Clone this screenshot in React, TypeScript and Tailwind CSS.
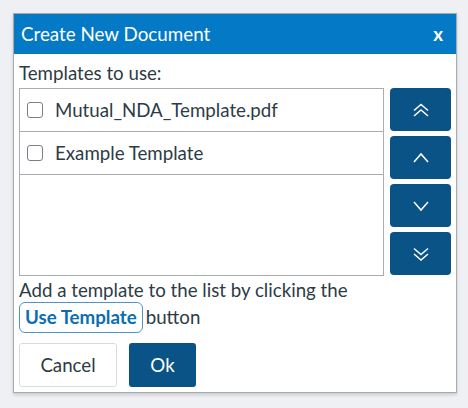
import React from 'react';

function Chevron({ dir, double }: { dir: 'up' | 'down'; double?: boolean }) {
  const up = dir === 'up';
  const paths = double
    ? up
      ? ['M1 7.5 L8 1.5 L15 7.5', 'M1 13 L8 7 L15 13']
      : ['M1 1.5 L8 7.5 L15 1.5', 'M1 7 L8 13 L15 7']
    : up
      ? ['M1 11 L8 3 L15 11']
      : ['M1 3 L8 11 L15 3'];
  return (
    <svg width="16" height="14" viewBox="0 0 16 14" fill="none" stroke="white" strokeWidth="1.5">
      {paths.map((d) => (
        <path key={d} d={d} />
      ))}
    </svg>
  );
}

export default function App() {
  const templates = ['Mutual_NDA_Template.pdf', 'Example Template'];
  const moves: { dir: 'up' | 'down'; double?: boolean }[] = [
    { dir: 'up', double: true },
    { dir: 'up' },
    { dir: 'down' },
    { dir: 'down', double: true },
  ];

  return (
    <div className="min-h-screen w-full bg-[#eef0f4] p-[13px] font-['Lato','Noto_Sans',sans-serif] text-[#2d3b45]">
      <div className="w-[444px] border border-[#a7abaf] bg-white shadow-[0_2px_3px_rgba(0,0,0,0.15)]">
        <div className="flex h-[40px] items-center justify-between bg-[#0479c6] pl-[7px] pr-[13px] text-white">
          <span className="text-[18.8px]">Create New Document</span>
          <span className="text-[18.8px] font-bold">x</span>
        </div>

        <div className="px-[5px] pb-[5px] pt-[7px]">
          <div className="text-[18.7px] leading-[24px]">Templates to use:</div>

          <div className="mt-[3px] flex gap-[6px]">
            <div className="h-[188px] flex-1 border border-[#a9acb0]">
              {templates.map((t) => (
                <label key={t} className="flex h-[43px] items-center border-b border-[#a9acb0] pl-[7px]">
                  <span className="h-[16px] w-[16px] rounded-[3px] border border-[#7a7f84] bg-white" />
                  <span className="ml-[12px] text-[18.7px]">{t}</span>
                </label>
              ))}
            </div>

            <div className="flex w-[61px] flex-col gap-[5px]">
              {moves.map((m, i) => (
                <button
                  key={i}
                  className="flex h-[43px] items-center justify-center rounded-[4px] bg-[#0a5386]"
                >
                  <Chevron dir={m.dir} double={m.double} />
                </button>
              ))}
            </div>
          </div>

          <div className="mt-[2px] text-[18.7px] leading-[24px]">
            Add a template to the list by clicking the
          </div>
          <div className="flex items-center text-[18.7px]">
            <span className="rounded-[6px] border border-[#4e94cc] px-[5px] leading-[29px] font-bold text-[#0b6db3]">
              Use Template
            </span>
            <span className="ml-[3px]">button</span>
          </div>

          <div className="mt-[10px] flex gap-[12px]">
            <button className="h-[44px] w-[98px] rounded-[3px] border border-[#d9dcdf] bg-white text-[18.7px] text-[#2d3b45]">
              Cancel
            </button>
            <button className="h-[44px] w-[67px] rounded-[3px] bg-[#0a5386] text-[18.7px] text-white">
              Ok
            </button>
          </div>
        </div>
      </div>
    </div>
  );
}
